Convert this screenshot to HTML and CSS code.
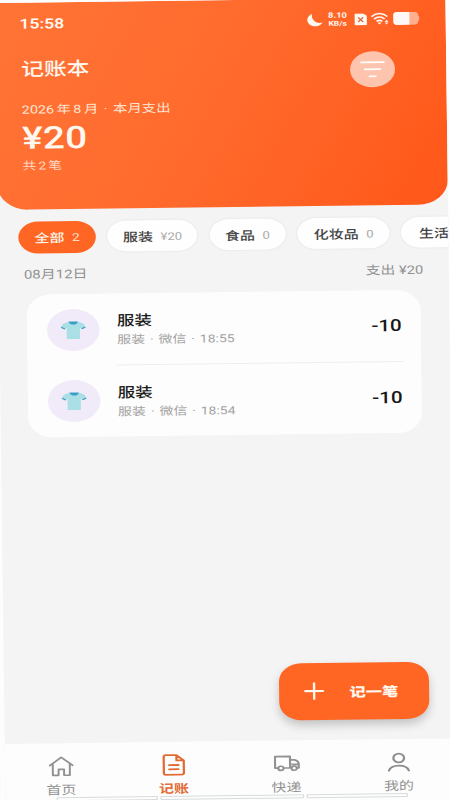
FILE: index.html
```html
<!DOCTYPE html>
<html lang="zh-CN">
<head>
<meta charset="utf-8">
<title>记账本</title>
<link rel="stylesheet" href="styles.css">
</head>
<body>
<svg width="0" height="0" class="defs">
  <symbol id="shirt" viewBox="0 0 20 18">
    <path d="M6.500.5 1.800 2.500 0 6.600l3 1.600 1.700-1.500V18h10.600V6.700L17 8.200l3-1.600-1.800-4.100L13.500.5z" fill="#a9dfe5"/>
    <path d="M6.300.4h7.400C13.400 4.600 6.600 4.600 6.300.4z" fill="#3b9fc3"/>
    <path d="m.2 6.100 3.200 1.700M19.800 6.100l-3.200 1.700" stroke="#459fc5" stroke-width="1.200"/>
  </symbol>
</svg>
<div class="screen">
<div class="app">
  <header class="header">
    <div class="status">
      <span class="time">15:58</span>
      <div class="sys">
        <svg class="moon" width="13" height="14" viewBox="0 0 13 14"><path d="M4.200 1A6.400 6.400 0 1 0 12.500 9.600C7.600 11.600 3 6.400 4.200 1z" fill="#fff8f0"/></svg>
        <div class="speed"><div class="rate">8.10</div><div>KB/s</div></div>
        <svg class="sim" width="10" height="12" viewBox="0 0 10 12"><path d="M1 0h6l3 2.400V11q0 1-1 1H1q-1 0-1-1V1q0-1 1-1z" fill="#fff8f0"/><path d="m3 4 4 4.500M7 4 3 8.500" stroke="#d9683c" stroke-width="1.200"/></svg>
        <svg class="wifi" width="15" height="13" viewBox="0 0 15 13" fill="none" stroke="#fff8f0" stroke-width="1.500"><path d="M.6 4.400q6.400-6 12.800 0M2.700 6.900q4.300-4 8.600 0M4.700 9.200q2.300-2 4.600 0"/><path d="m7 12.300-1.700-2h3.400z" fill="#fff8f0" stroke="none"/><path d="m12.700 7.700 1.500 2.100h-3zm0 4.800 1.500-2.100h-3z" fill="#fff8f0" stroke="none"/></svg>
        <svg width="21" height="13" viewBox="0 0 21 13"><rect width="20" height="13" rx="3.400" fill="#ffae8e"/><path d="M3.400 0H13v13H3.400Q0 13 0 9.600V3.400Q0 0 3.400 0z" fill="#fff8f4"/><rect x="19.800" y="4" width="1.200" height="5" rx=".6" fill="#ffae8e"/></svg>
      </div>
    </div>
    <div class="titlebar">
      <h1>记账本</h1>
      <div class="filter"><svg width="20" height="18" viewBox="0 0 20 18" stroke="#fff" stroke-width="1.700" stroke-linecap="round"><path d="M1 2h18M4 9h12M7.600 16h4.800"/></svg></div>
    </div>
    <div class="month"><span>2026 年 8 月</span><span>·</span><span>本月支出</span></div>
    <div class="amount">¥20</div>
    <div class="count">共 2 笔</div>
  </header>

  <nav class="chips">
    <div class="chip active">全部<span>2</span></div>
    <div class="chip c2">服装<span>¥20</span></div>
    <div class="chip c3">食品<span>0</span></div>
    <div class="chip c4">化妆品<span>0</span></div>
    <div class="chip c5">生活</div>
  </nav>

  <div class="day"><span>08月12日</span><span class="sum">支出 ¥20</span></div>

  <section class="card">
    <div class="row">
      <div class="avatar"><svg width="20" height="18"><use href="#shirt"/></svg></div>
      <div class="body">
        <div class="info"><div class="name">服装</div><div class="meta">服装 · 微信 · 18:55</div></div>
        <div class="value">-10</div>
      </div>
    </div>
    <div class="row">
      <div class="avatar"><svg width="20" height="18"><use href="#shirt"/></svg></div>
      <div class="body">
        <div class="info"><div class="name">服装</div><div class="meta">服装 · 微信 · 18:54</div></div>
        <div class="value">-10</div>
      </div>
    </div>
  </section>

  <div class="fab">
    <svg width="16" height="18" viewBox="0 0 16 18" stroke="#fff6ee" stroke-linecap="round"><path d="M1 9h14" stroke-width="2.200"/><path d="M8 1.200v15.600" stroke-width="1.900"/></svg>
    <span>记一笔</span>
  </div>

  <footer class="tabs">
    <div class="tab"><svg width="20" height="20" viewBox="0 0 20 20" fill="none" stroke="#929292" stroke-width="1.600" stroke-linejoin="round" stroke-linecap="round"><path d="M.8 9.200 10 1l9.200 8.200M3.200 7.600V19h4.600v-6h4.400v6h4.600V7.600"/></svg><span>首页</span></div>
    <div class="tab on"><svg width="20" height="22" viewBox="0 0 20 22" fill="none" stroke="#e26a33" stroke-width="1.800" stroke-linejoin="round" stroke-linecap="round"><path d="M3.600 1.200h8.600L18 6.600v12.600q0 1.600-1.600 1.600H3.600Q2 20.800 2 19.200V2.800Q2 1.200 3.600 1.200zM12.200 1.200v5.400H18M6.300 11.200h7.400M6.300 15.400h7.400"/></svg><span>记账</span></div>
    <div class="tab"><svg width="21" height="16" viewBox="0 0 21 16" fill="none" stroke="#929292" stroke-width="1.700" stroke-linejoin="round"><path d="M3.400 12.500H1V1h12v11.500H8M13 4.500h3.600Q20 5.500 20 9v3.500h-1.400M14 12.500h-1M14 9h6"/><circle cx="5.700" cy="12.800" r="2.100"/><circle cx="16.300" cy="12.800" r="2.100"/></svg><span>快递</span></div>
    <div class="tab"><svg width="18" height="19" viewBox="0 0 18 19" fill="none" stroke="#8d8d8d" stroke-width="1.800" stroke-linecap="round"><ellipse cx="9" cy="5.500" rx="4.300" ry="4.400"/><path d="M1 18q1.400-5 8-5t8 5"/></svg><span>我的</span></div>
  </footer>
  <div class="outlines"><i></i><i></i><i></i></div>
</div>
</div>
</body>
</html>
```
FILE: styles.css
```css
* { box-sizing: border-box; }
body {
  margin: 0;
  background: #fdfdfd;
  font-family: Roboto, "Noto Sans CJK SC", sans-serif;
}
.defs { position: absolute; }
.screen { width: 450px; height: 800px; overflow: hidden; }
.app {
  width: 360px;
  height: 812px;
  background: #f4f4f4;
  transform-origin: 0 0;
  transform: matrix(1.25, -0.0157, 0.0126, 1, -4.6, 3);
  display: flex;
  flex-direction: column;
  overflow: hidden;
}
.header {
  height: 206.700px;
  flex: none;
  padding: 0 20px;
  border-radius: 0 0 24px 24px;
  background: linear-gradient(115deg, #ff7436 0%, #ff6a2c 50%, #ff5719 100%);
  color: #fff8f0;
}
.status { display: flex; justify-content: space-between; align-items: center; height: 41px; }
.time { font-size: 14px; font-weight: 600; margin-left: -1px; }
.sys { display: flex; align-items: center; margin-right: 1px; margin-top: 0; }
.speed { font-size: 6.800px; line-height: 8px; height: 16px; font-weight: 700; text-align: center; width: 16px; margin: 0 5px 0 3.500px; white-space: nowrap; }
.rate { font-size: 7.500px; }
.wifi { margin: 0 3.500px 0 3px; }
.titlebar { display: flex; justify-content: space-between; height: 57px; }
h1 { margin: 13px 0 0; font-size: 18.200px; line-height: 26px; font-weight: 500; }
.filter {
  width: 36px; height: 36px; margin: 12px 20.600px 0 0;
  border-radius: 50%; background: #ffc4ae;
  display: flex; align-items: center; justify-content: center;
}
.month { display: flex; gap: 4.400px; margin-top: 1px; font-size: 11.500px; line-height: 16px; color: #ffe6d4; white-space: nowrap; }
.month span:first-child { word-spacing: -0.900px; }
.amount { font-size: 31px; line-height: 36px; margin-top: 3px; font-weight: 500; letter-spacing: .2px; }
.count { font-size: 11px; line-height: 16px; margin-top: 1.500px; color: #ffdac6; word-spacing: -1px; }

.chips { display: flex; gap: 9.200px; height: 32px; margin: 12px 0 0 15.700px; align-items: center; flex: none; }
.chip {
  flex: none; height: 31px; border-radius: 16px; background: #fefefe;
  box-shadow: 0 0 2px rgba(0,0,0,.1);
  display: flex; align-items: center; justify-content: center; gap: 6px;
  font-size: 12px; font-weight: 500; color: #444;
}
.chip span { font-size: 10.500px; font-weight: 400; color: #aaa; margin-top: 2px; }
.active { width: 62.500px; height: 32px; background: #ff6623; color: #fff5ea; box-shadow: none; }
.active span { color: #ffe0cc; font-size: 11px; }
.c2 { width: 72px; }
.c3 { width: 61.500px; }
.c4 { width: 74px; }
.c5 { width: 74px; justify-content: flex-start; padding-left: 14px; }

.day {
  display: flex; justify-content: space-between; flex: none;
  padding: 0 20.500px 0 20px; margin-top: 12.500px;
  font-size: 12px; line-height: 18px; color: #929292;
}
.sum { font-size: 11.800px; margin-top: -0.500px; }

.card { margin: 11px 23px 0 22px; height: 143px; flex: none; border-radius: 20px; background: #fdfdfd; }
.row { display: flex; align-items: center; height: 71.500px; padding-left: 15.600px; }
.avatar {
  width: 42px; height: 42px; border-radius: 50%; background: #f1ebf9;
  display: flex; align-items: center; justify-content: center; flex: none;
}
.body {
  flex: 1; height: 100%; margin: 0 14px 0 13.400px; padding: 0 1.200px 0 1px;
  display: flex; align-items: center; justify-content: space-between;
}
.row:first-child .body { border-bottom: 1px solid #eee; }
.info { padding-top: 3px; }
.name { font-size: 14px; line-height: 20px; font-weight: 500; color: #1c1c1c; }
.meta { font-size: 11.200px; line-height: 18px; color: #a2a2a2; word-spacing: 1.100px; margin-top: 1px; }
.value { font-size: 16.500px; font-weight: 500; color: #181818; margin-top: 1px; }

.fab {
  width: 120px; height: 56.500px; flex: none; margin: auto 0 20px 219.700px;
  padding-left: 20px; border-radius: 18px;
  background: #ff6624; color: #fff6ee; box-shadow: 0 5px 9px rgba(0,0,0,.2);
  display: flex; align-items: center; gap: 20.500px;
  font-size: 13px; font-weight: 800;
}
.tabs {
  height: 71.400px; flex: none; background: #fdfdfd; margin-bottom: -17px;
  display: grid; grid-template-columns: repeat(4, 1fr);
}
.tab { display: flex; flex-direction: column; align-items: center; font-size: 12px; line-height: 16px; color: #929292; }
.tab svg { height: 22px; margin-top: 12px; }
.tab span { margin-top: 5px; }
.on { color: #e26a33; font-weight: 700; }
.outlines { display: flex; gap: 2px; padding-left: 41px; height: 17px; flex: none; }
.outlines i { width: 81px; height: 4px; border: 1px solid #d9dcdc; border-radius: 1px; }
.outlines i:nth-child(2) { width: 115px; }
```
